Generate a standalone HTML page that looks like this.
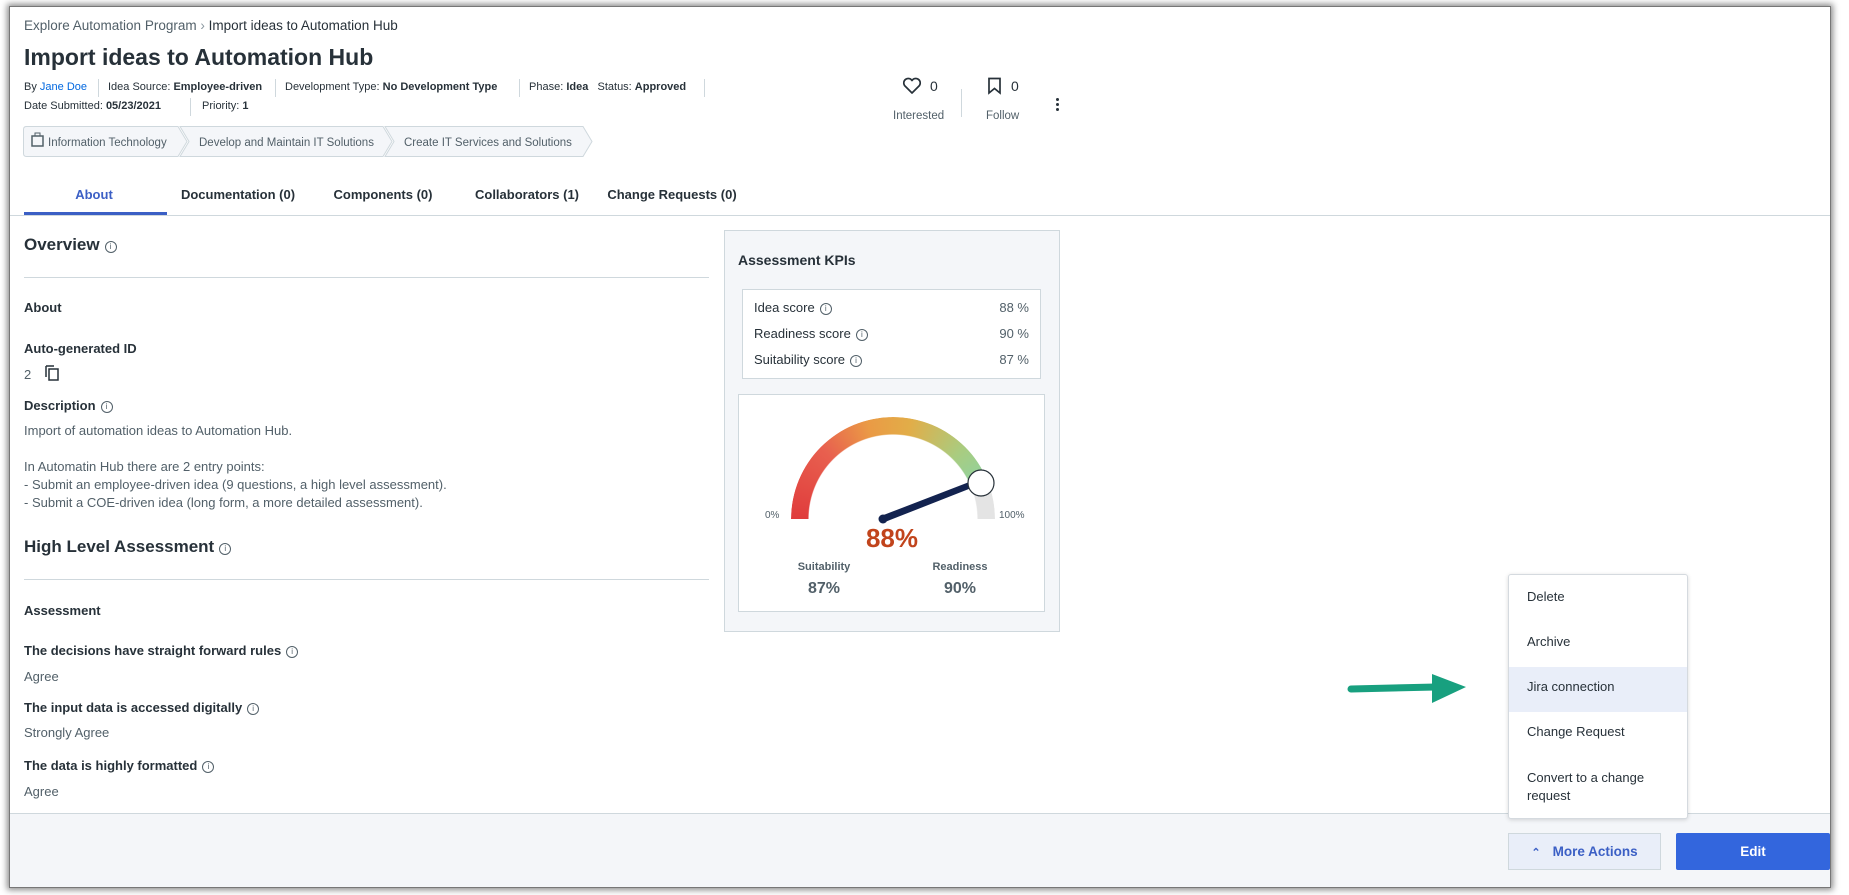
<!DOCTYPE html>
<html><head><meta charset="utf-8"><style>
*{margin:0;padding:0;box-sizing:border-box}
body{width:1849px;height:895px;background:#fff;position:relative;overflow:hidden;font-family:"Liberation Sans",sans-serif;color:#273139}
.win{position:absolute;left:9px;top:6px;width:1822px;height:882px;background:#fff;border:1px solid #777;box-shadow:0 0 6px 2px rgba(0,0,0,.45);overflow:hidden}
.a{position:absolute;white-space:nowrap}
.meta{font-size:11px;color:#273139}
.meta b{font-weight:bold}
.sep{position:absolute;width:1px;background:#cfd8dd}
.tab{position:absolute;top:180px;font-size:13px;font-weight:bold;color:#273139;transform:translateX(-50%)}
.h2{font-size:17px;font-weight:bold;color:#273139}
.lbl{font-size:13px;font-weight:bold}
.txt{font-size:13px;color:#526069}
.info{display:inline-block;width:12px;height:12px;border:1px solid #526069;border-radius:50%;font-size:8px;line-height:10px;text-align:center;color:#526069;vertical-align:1px;margin-left:5px;font-weight:normal}
.mi{position:absolute;left:18px;font-size:13px;color:#273139}
</style></head><body>
<div class="win">
<div class="a" style="left:14px;top:11px;font-size:13.5px;color:#526069">Explore Automation Program <span style="color:#8a979f">&rsaquo;</span> <span style="color:#273139">Import ideas to Automation Hub</span></div>
<div class="a" style="left:14px;top:37px;font-size:23px;font-weight:bold;color:#273139">Import ideas to Automation Hub</div>
<div class="a meta" style="left:14px;top:74px">By <span style="color:#0067df">Jane Doe</span></div>
<div class="sep" style="left:88px;top:72px;height:18px"></div>
<div class="a meta" style="left:98px;top:74px">Idea Source: <b>Employee-driven</b></div>
<div class="sep" style="left:265px;top:72px;height:18px"></div>
<div class="a meta" style="left:275px;top:74px">Development Type: <b>No Development Type</b></div>
<div class="sep" style="left:509px;top:72px;height:18px"></div>
<div class="a meta" style="left:519px;top:74px">Phase: <b>Idea</b> &nbsp; Status: <b>Approved</b></div>
<div class="sep" style="left:694px;top:72px;height:18px"></div>
<div class="a meta" style="left:14px;top:93px">Date Submitted: <b>05/23/2021</b></div>
<div class="sep" style="left:180px;top:91px;height:18px"></div>
<div class="a meta" style="left:192px;top:93px">Priority: <b>1</b></div>
<svg class="a" style="left:13px;top:119px" width="570" height="32">
<g fill="#f4f6f9" stroke="#cfd8dd" stroke-width="1">
<path d="M0.5 3.5 Q0.5 .5 3.5 .5 H155 L164 15.5 L155 30.5 H3.5 Q.5 30.5 .5 27.5Z"/>
<path d="M157 .5 H360 L369 15.5 L360 30.5 H157 L166 15.5Z"/>
<path d="M362 .5 H560 L569 15.5 L560 30.5 H362 L371 15.5Z"/>
</g>
<rect x="9" y="10" width="11" height="10" fill="none" stroke="#526069" stroke-width="1.5"/><rect x="12" y="7" width="5" height="3" fill="none" stroke="#526069"/>
<text x="25" y="20" font-size="11.5" fill="#526069" font-family="Liberation Sans">Information Technology</text>
<text x="176" y="20" font-size="11.5" fill="#526069" font-family="Liberation Sans">Develop and Maintain IT Solutions</text>
<text x="381" y="20" font-size="11.5" fill="#526069" font-family="Liberation Sans">Create IT Services and Solutions</text>
</svg>
<svg class="a" style="left:892px;top:70px" width="20" height="18"><path d="M10 16 L2.5 8.5 A4 4 0 0 1 10 3.5 A4 4 0 0 1 17.5 8.5Z" fill="none" stroke="#273139" stroke-width="1.7" stroke-linejoin="round"/></svg>
<div class="a" style="left:920px;top:71px;font-size:14px">0</div>
<div class="a" style="left:883px;top:103px;font-size:11.5px;color:#526069">Interested</div>
<div class="sep" style="left:951px;top:82px;height:28px"></div>
<svg class="a" style="left:977px;top:70px" width="16" height="18"><path d="M2 1.5 H13 V16 L7.5 11.5 L2 16Z" fill="none" stroke="#273139" stroke-width="1.7"/></svg>
<div class="a" style="left:1001px;top:71px;font-size:14px">0</div>
<div class="a" style="left:976px;top:103px;font-size:11.5px;color:#526069">Follow</div>
<div class="a" style="left:1046px;top:91px;width:3px;height:3px;background:#273139;border-radius:50%;box-shadow:0 5px 0 #273139,0 10px 0 #273139"></div>
<div class="tab" style="left:84px;color:#3b5fc5">About</div>
<div class="tab" style="left:228px">Documentation (0)</div>
<div class="tab" style="left:373px">Components (0)</div>
<div class="tab" style="left:517px">Collaborators (1)</div>
<div class="tab" style="left:662px">Change Requests (0)</div>
<div class="a" style="left:0;top:208px;width:1822px;height:1px;background:#cfd8dd"></div>
<div class="a" style="left:14px;top:205px;width:143px;height:3px;background:#3b5fc5"></div>
<div class="a h2" style="left:14px;top:228px">Overview<span class="info">i</span></div>
<div class="a" style="left:14px;top:270px;width:685px;height:1px;background:#cfd8dd"></div>
<div class="a lbl" style="left:14px;top:293px">About</div>
<div class="a lbl" style="left:14px;top:334px">Auto-generated ID</div>
<div class="a txt" style="left:14px;top:360px">2</div>
<svg class="a" style="left:35px;top:358px" width="14" height="16"><path d="M1 1 V12 M1 1 H9" stroke="#273139" stroke-width="1.5" fill="none"/><rect x="4" y="4" width="9" height="11" fill="none" stroke="#273139" stroke-width="1.5"/></svg>
<div class="a lbl" style="left:14px;top:391px">Description<span class="info">i</span></div>
<div class="a txt" style="left:14px;top:415px;line-height:18px">Import of automation ideas to Automation Hub.<br><br>In Automatin Hub there are 2 entry points:<br>- Submit an employee-driven idea (9 questions, a high level assessment).<br>- Submit a COE-driven idea (long form, a more detailed assessment).</div>
<div class="a h2" style="left:14px;top:530px">High Level Assessment<span class="info">i</span></div>
<div class="a" style="left:14px;top:572px;width:685px;height:1px;background:#cfd8dd"></div>
<div class="a lbl" style="left:14px;top:596px">Assessment</div>
<div class="a lbl" style="left:14px;top:636px">The decisions have straight forward rules<span class="info">i</span></div>
<div class="a txt" style="left:14px;top:662px">Agree</div>
<div class="a lbl" style="left:14px;top:693px">The input data is accessed digitally<span class="info">i</span></div>
<div class="a txt" style="left:14px;top:718px">Strongly Agree</div>
<div class="a lbl" style="left:14px;top:751px">The data is highly formatted<span class="info">i</span></div>
<div class="a txt" style="left:14px;top:777px">Agree</div>
<div class="a" style="left:714px;top:223px;width:336px;height:402px;background:#f4f6f9;border:1px solid #cfd8dd">
 <div class="a" style="left:13px;top:21px;font-size:14px;font-weight:bold">Assessment KPIs</div>
 <div class="a" style="left:17px;top:58px;width:299px;height:90px;background:#fff;border:1px solid #cfd8dd;font-size:13px;color:#273139">
  <div class="a" style="left:11px;top:10px">Idea score<span class="info">i</span></div><div class="a" style="right:11px;top:10px;color:#526069">88 %</div>
  <div class="a" style="left:11px;top:36px">Readiness score<span class="info">i</span></div><div class="a" style="right:11px;top:36px;color:#526069">90 %</div>
  <div class="a" style="left:11px;top:62px">Suitability score<span class="info">i</span></div><div class="a" style="right:11px;top:62px;color:#526069">87 %</div>
 </div>
 <div class="a" style="left:13px;top:163px;width:307px;height:218px;background:#fff;border:1px solid #cfd8dd">
  <div class="a" style="left:52px;top:22px;width:204px;height:102px;overflow:hidden">
   <div style="width:204px;height:204px;border-radius:50%;background:conic-gradient(from 270deg,#e03c3c 0deg,#e8604f 45deg,#ea9a45 75deg,#e2ad48 100deg,#a9cc80 135deg,#8fd2a0 158deg,#e4e4e4 158deg 180deg,transparent 180deg);-webkit-mask:radial-gradient(circle,transparent 84px,#000 85px);mask:radial-gradient(circle,transparent 84px,#000 85px)"></div>
  </div>
  <svg class="a" style="left:0;top:0" width="307" height="218">
   <path d="M142 121 L238 84 L240 90 L146 127Z" fill="#13234f"/>
   <circle cx="144" cy="124" r="4.5" fill="#13234f"/>
   <circle cx="242" cy="88" r="13" fill="#fff" stroke="#273139" stroke-width="1.2"/>
   <text x="26" y="123" font-size="10" fill="#526069" font-family="Liberation Sans">0%</text>
   <text x="260" y="123" font-size="10" fill="#526069" font-family="Liberation Sans">100%</text>
   <text x="153" y="152" font-size="26" font-weight="bold" fill="#c1441c" text-anchor="middle" font-family="Liberation Sans">88%</text>
   <text x="85" y="175" font-size="11" font-weight="bold" fill="#526069" text-anchor="middle" font-family="Liberation Sans">Suitability</text>
   <text x="85" y="198" font-size="16" font-weight="bold" fill="#526069" text-anchor="middle" font-family="Liberation Sans">87%</text>
   <text x="221" y="175" font-size="11" font-weight="bold" fill="#526069" text-anchor="middle" font-family="Liberation Sans">Readiness</text>
   <text x="221" y="198" font-size="16" font-weight="bold" fill="#526069" text-anchor="middle" font-family="Liberation Sans">90%</text>
  </svg>
 </div>
</div>
<div class="a" style="left:0;top:806px;width:1822px;height:80px;background:#f4f6f9;border-top:1px solid #cfd8dd"></div>
<div class="a" style="left:1498px;top:826px;width:153px;height:37px;background:#e9eef9;border:1px solid #cfd8dd;font-size:13.5px;font-weight:bold;color:#3b5fc5;text-align:center;line-height:35px"><span style="font-size:11px;margin-right:12px">&#8963;</span>More Actions</div>
<div class="a" style="left:1666px;top:826px;width:154px;height:37px;background:#3366dd;border-radius:2px;font-size:13.5px;font-weight:bold;color:#fff;text-align:center;line-height:37px">Edit</div>
<div class="a" style="left:1498px;top:567px;width:180px;height:245px;background:#fff;border:1px solid #d5dadf;border-radius:3px;box-shadow:0 1px 4px rgba(0,0,0,.15)">
 <div class="a" style="left:0;top:92px;width:178px;height:45px;background:#e9eef9"></div>
 <div class="mi" style="top:14px">Delete</div>
 <div class="mi" style="top:59px">Archive</div>
 <div class="mi" style="top:104px">Jira connection</div>
 <div class="mi" style="top:149px">Change Request</div>
 <div class="mi" style="top:194px;line-height:18px">Convert to a change<br>request</div>
</div>
<svg class="a" style="left:1336px;top:665px" width="125" height="35"><line x1="5" y1="17" x2="90" y2="15" stroke="#18a07f" stroke-width="7" stroke-linecap="round"/><path d="M86 2 L120 15 L86 31Z" fill="#18a07f"/></svg>
</div>
</body></html>
